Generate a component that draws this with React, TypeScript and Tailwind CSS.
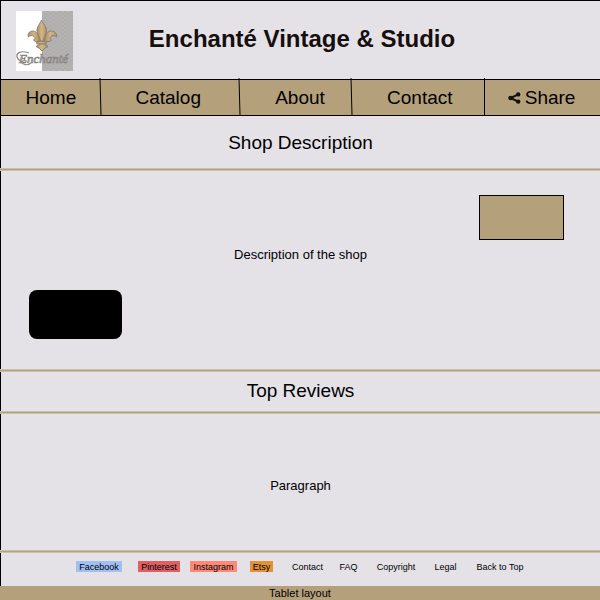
import React from "react";

const navItems = [
  { label: "Home", pad: "" },
  { label: "Catalog", pad: "pr-1" },
  { label: "About", pad: "pl-2" },
  { label: "Contact", pad: "pl-0.5" },
];

const footerLinks = [
  { label: "Facebook", style: "w-[46px] bg-[#a2bff3]" },
  { label: "Pinterest", style: "ml-4 w-[42px] bg-[#df6062]" },
  { label: "Instagram", style: "ml-[10px] w-[47px] bg-[#ff8877]" },
  { label: "Etsy", style: "ml-[13px] w-[23px] bg-[#e69138]" },
  { label: "Contact", style: "ml-[18px] w-[33px]" },
  { label: "FAQ", style: "ml-[15px] w-[19px]" },
  { label: "Copyright", style: "ml-[18px] w-[40px]" },
  { label: "Legal", style: "ml-[18px] w-[23px]" },
  { label: "Back to Top", style: "ml-[18px] w-[50px]" },
];

function Logo() {
  return (
    <svg width="57" height="60" viewBox="0 0 57 60" role="img" aria-label="Enchanté logo">
      <defs>
        <pattern id="weave" width="6" height="4" patternUnits="userSpaceOnUse">
          <rect width="6" height="4" fill="#b5b2b2" />
          <path d="M0 0h3v2H0zM3 2h3v2H3z" fill="#b0adad" />
        </pattern>
        <linearGradient id="gold" x1="0" x2="1">
          <stop offset="0" stopColor="#b08f60" />
          <stop offset="0.5" stopColor="#d3b888" />
          <stop offset="1" stopColor="#b08f60" />
        </linearGradient>
      </defs>
      <rect width="57" height="60" fill="#fff" />
      <rect x="26" width="31" height="60" fill="url(#weave)" />
      <g fill="url(#gold)" stroke="#857a6e" strokeWidth="0.9" strokeLinejoin="round">
        <path d="M25.5 9C24 13 20.500 16 21 20C21.500 24 24 26 24.500 30H27C27.500 26 30 24 30.500 20C31 16 27 13 25.500 9Z" />
        <path d="M23.500 30C23.500 24 20 20 17 20C13 20 11.500 23 12.500 26C13.500 24.500 16 24 18 25.500C19.500 27 19 28.500 17.500 29C19 31 22 31 23.500 30Z" />
        <path d="M28.500 30C28.500 24 32 20 35 20C39 20 41.500 23 40.500 26C39.500 24.500 37 24 35 25.500C33.500 27 34 28.500 35.500 29C34 31 30 31 28.500 30Z" />
        <rect x="20.500" y="30.500" width="10" height="2.500" rx="1" />
        <path d="M24 33L20 35.500L23 37L26 40L29 37L32 35.500L28 33Z" />
      </g>
      <text
        x="3"
        y="52"
        fontSize="13"
        fontStyle="italic"
        fontFamily="'Liberation Serif', serif"
        fill="#c8c5c5"
        stroke="#838080"
        strokeWidth="0.7"
      >
        Enchanté
      </text>
      <path d="M13 42C5 39 0 42 1 46C2 50 7 51 9 49M4 50C7 54 11 55 15 52" fill="none" stroke="#8d8989" strokeWidth="1.2" />
    </svg>
  );
}

function ShareIcon() {
  return (
    <svg width="13" height="12" viewBox="0 0 13 12" aria-hidden="true">
      <path d="M10.200 2.300L2.600 6L10.200 9.700" fill="none" stroke="#111" strokeWidth="2" />
      <circle cx="2.600" cy="6" r="2.300" fill="#111" />
      <circle cx="10.200" cy="2.400" r="2.200" fill="#111" />
      <circle cx="10.200" cy="9.600" r="2.200" fill="#111" />
    </svg>
  );
}

function Divider({ slanted }: { slanted: boolean }) {
  return (
    <svg className="absolute -top-0.5 -right-px" width="3" height="37" viewBox="0 0 3 37" aria-hidden="true">
      <path d={slanted ? "M1 0L2 37" : "M1.500 0V37"} stroke="#000" strokeWidth="1" />
    </svg>
  );
}

function Rule() {
  return <div className="-ml-px h-[3px] border-y border-[#cbbfad] bg-[#b5a07c]" />;
}

export default function App() {
  return (
    <div className="bg-[#e4e2e7] font-['Liberation_Sans',Arial,sans-serif] text-black">
      <div className="border-t border-l border-black">
        <header className="grid h-[78px] grid-cols-[72px_1fr_72px] items-start pt-[10px] pl-[15px]">
          <Logo />
          <h1 className="-ml-3 text-center text-2xl leading-[56px] font-bold whitespace-nowrap text-[#170e0e]">
            Enchanté Vintage &amp; Studio
          </h1>
        </header>

        <nav className="grid h-[37px] grid-cols-[100fr_139fr_113fr_133fr_115fr] border-y border-black bg-[#b5a07c] text-[19px] leading-9">
          {navItems.map((item, i) => (
            <div key={item.label} className={`relative text-center ${item.pad}`}>
              <a href="#">{item.label}</a>
              <Divider slanted={i < 3} />
            </div>
          ))}
          <button type="button" className="flex items-center justify-center gap-1 pr-0.5">
            <ShareIcon />
            <span>Share</span>
          </button>
        </nav>

        <main>
          <h2 className="pt-[13px] pb-[11px] text-center text-[19px] leading-7">Shop Description</h2>
          <Rule />
          <section className="flex flex-col pt-6 pr-9 pb-[30px] pl-7">
            <div className="h-[45px] w-[85px] self-end border border-black bg-[#b5a07c]" />
            <p className="mt-[5px] -mr-2 text-center text-[13px] leading-5">Description of the shop</p>
            <div className="mt-[25px] h-[49px] w-[93px] rounded-lg bg-black" />
          </section>
          <Rule />
          <h2 className="pt-[5px] pb-1.5 text-center text-[19px] leading-7">Top Reviews</h2>
          <Rule />
          <section className="pt-16 pb-[56px]">
            <p className="text-center text-[13px] leading-4">Paragraph</p>
          </section>
          <Rule />
        </main>

        <footer className="flex h-[33px] justify-center pt-2">
          {footerLinks.map((link) => (
            <a
              key={link.label}
              href="#"
              className={`h-[11px] text-center text-[9px] leading-3 whitespace-nowrap ${link.style}`}
            >
              {link.label}
            </a>
          ))}
        </footer>
      </div>
      <div className="bg-[#b5a07c] text-center text-[11px] leading-[14px]">Tablet layout</div>
    </div>
  );
}
